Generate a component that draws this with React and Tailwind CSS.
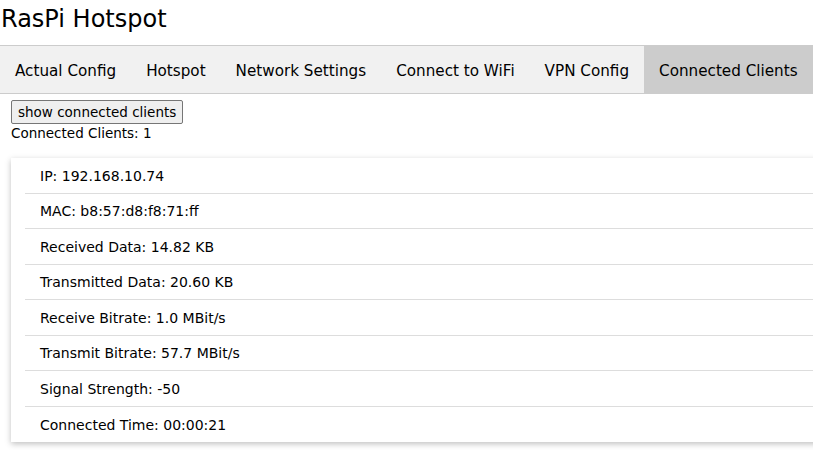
import React from "react";

const tabs = ["Actual Config", "Hotspot", "Network Settings", "Connect to WiFi", "VPN Config", "Connected Clients"];

const client = [
  "IP: 192.168.10.74",
  "MAC: b8:57:d8:f8:71:ff",
  "Received Data: 14.82 KB",
  "Transmitted Data: 20.60 KB",
  "Receive Bitrate: 1.0 MBit/s",
  "Transmit Bitrate: 57.7 MBit/s",
  "Signal Strength: -50",
  "Connected Time: 00:00:21",
];

export default function App() {
  return (
    <div className="w-[813px] h-[450px] overflow-hidden bg-white text-black font-['DejaVu_Sans',sans-serif]">
      <h2 className="text-[24px] leading-[36px] pt-[1px] pl-[1px]">RasPi Hotspot</h2>
      <div className="mt-[8px] flex w-[813px] h-[49px] bg-[#f1f1f1] border-y border-[#ccc]">
        {tabs.map((t) => (
          <div
            key={t}
            className={`px-[15px] pt-[3px] flex items-center text-[15.2px] ${t === "Connected Clients" ? "bg-[#ccc]" : ""}`}
          >
            {t}
          </div>
        ))}
      </div>
      <div className="px-[11px] pt-[6px]">
        <button className="h-[24px] px-[6px] text-[13.5px] bg-[#efefef] border border-[#767676] rounded-[2px]">
          show connected clients
        </button>
        <p className="text-[13.5px] leading-[18px]">Connected Clients: 1</p>
        <div className="mt-[16px] w-[900px] bg-white shadow-[0_2px_6px_rgba(0,0,0,0.25)] pl-[14px]">
          <ul>
            {client.map((c, i) => (
              <li
                key={c}
                className={`h-[35.5px] flex items-center pt-[2px] pl-[15px] text-[14px] ${i < client.length - 1 ? "border-b border-[#ddd]" : ""}`}
              >
                {c}
              </li>
            ))}
          </ul>
        </div>
      </div>
    </div>
  );
}
